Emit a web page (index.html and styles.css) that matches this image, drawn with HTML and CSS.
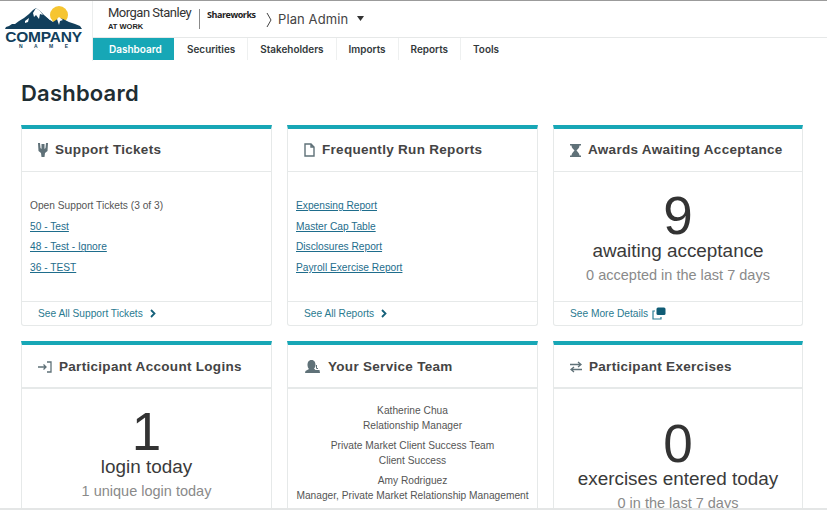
FILE: index.html
```html
<!DOCTYPE html>
<html lang="en">
<head>
<meta charset="utf-8">
<title>Dashboard</title>
<link rel="stylesheet" href="styles.css">
</head>
<body>
<header class="topbar">
  <div class="logo">
    <svg class="logo-art" width="78" height="24" viewBox="0 0 78 24">
      <circle cx="54" cy="9" r="9" fill="#f6c531"/>
      <path d="M0 23 L1 21 L4 20 L7 18 L10 18 L14 15 L19 12 L24 8 L28 4 L31 2 L35 5 L39 9 L45 14 L48 16 L54 12 L58 13 L64 16 L70 18 L75 20 L77 23 Z" fill="#123f5c"/>
      <path d="M31 2 L35 5 L38 9 L35 8 L34 13 L31 9 L29 11 L28 7 Z" fill="#fff"/>
      <path d="M33 2 L35 2 L47 14 L45 14 Z" fill="#fff"/>
      <path d="M52 13 L54 11 L58 14 L55 15 L54 19 Z" fill="#fff"/>
      <path d="M20 15 L24 12 L23 16 L20 17 Z" fill="#fff"/>
    </svg>
    <div class="logo-name">COMPANY</div>
    <div class="logo-sub">NAME</div>
  </div>
  <div class="top-right">
    <div class="brand-row">
      <div class="ms">
        <div class="ms-name">Morgan Stanley</div>
        <div class="ms-sub">AT WORK</div>
      </div>
      <div class="shareworks">Shareworks</div>
      <svg class="crumb" width="6" height="16" viewBox="0 0 6 16"><path d="M1 1 L5 8 L1 15" fill="none" stroke="#444" stroke-width="1"/></svg>
      <div class="plan">Plan Admin</div>
      <svg class="caret" width="7" height="5" viewBox="0 0 7 5"><path d="M0 0 H7 L3.500 5 Z" fill="#333"/></svg>
    </div>
    <nav class="nav">
      <a class="tab active">Dashboard</a>
      <a class="tab">Securities</a>
      <a class="tab">Stakeholders</a>
      <a class="tab">Imports</a>
      <a class="tab">Reports</a>
      <a class="tab last">Tools</a>
    </nav>
  </div>
</header>
<main class="main">
  <h1 class="page-title">Dashboard</h1>
  <div class="grid">
    <section class="card">
      <div class="card-head">
        <svg class="icon" width="10" height="14" viewBox="0 0 10 14"><path d="M0 0 L2 0 L2.500 5 L3.500 6 L3.500 1 L6.500 1 L6.500 6 L7.500 5 L8 0 L10 0 L9.500 8 L7 10 L6.500 14 L3.500 14 L3 10 L0.500 8 Z" fill="#5f7178"/></svg>
        <h2>Support Tickets</h2>
      </div>
      <div class="card-body list">
        <p>Open Support Tickets (3 of 3)</p>
        <p><a>50 - Test</a></p>
        <p><a>48 - Test - Ignore</a></p>
        <p><a>36 - TEST</a></p>
      </div>
      <div class="card-foot"><span>See All Support Tickets</span>
        <svg class="chev" width="6" height="9" viewBox="0 0 6 9"><path d="M1 1 L4.500 4.500 L1 8" fill="none" stroke="#14607a" stroke-width="1.800"/></svg>
      </div>
    </section>
    <section class="card">
      <div class="card-head">
        <svg class="icon" width="11" height="14" viewBox="0 0 11 14"><path d="M1 1 H7 L10 4 V13 H1 Z M7 1 V4 H10" fill="none" stroke="#5f7178" stroke-width="1.400"/></svg>
        <h2>Frequently Run Reports</h2>
      </div>
      <div class="card-body list">
        <p><a>Expensing Report</a></p>
        <p><a>Master Cap Table</a></p>
        <p><a>Disclosures Report</a></p>
        <p><a>Payroll Exercise Report</a></p>
      </div>
      <div class="card-foot"><span>See All Reports</span>
        <svg class="chev" width="6" height="9" viewBox="0 0 6 9"><path d="M1 1 L4.500 4.500 L1 8" fill="none" stroke="#14607a" stroke-width="1.800"/></svg>
      </div>
    </section>
    <section class="card">
      <div class="card-head">
        <svg class="icon" width="11" height="13" viewBox="0 0 11 13"><path d="M0 0 H11 V1.500 H9.500 C9.500 4 7.500 5 6.500 6.500 C7.500 8 9.500 9 9.500 11.500 H11 V13 H0 V11.500 H1.500 C1.500 9 3.500 8 4.500 6.500 C3.500 5 1.500 4 1.500 1.500 H0 Z" fill="#5f7178"/></svg>
        <h2>Awards Awaiting Acceptance</h2>
      </div>
      <div class="card-body stat">
        <div class="num">9</div>
        <div class="stat-main">awaiting acceptance</div>
        <div class="stat-sub">0 accepted in the last 7 days</div>
      </div>
      <div class="card-foot"><span>See More Details</span>
        <svg class="popout" width="14" height="13" viewBox="0 0 14 13"><path d="M3 4 H1 V12 H9 V10" fill="none" stroke="#2b7f96" stroke-width="1.200"/><rect x="4.500" y="0.500" width="9" height="7.500" rx="1.500" fill="#0f5c75"/></svg>
      </div>
    </section>
    <section class="card">
      <div class="card-head">
        <svg class="icon" width="14" height="12" viewBox="0 0 14 12"><path d="M0 6 H8 M5.500 3.500 L8 6 L5.500 8.500 M9 1 H13 V11 H9" fill="none" stroke="#5f7178" stroke-width="1.300"/></svg>
        <h2>Participant Account Logins</h2>
      </div>
      <div class="card-body stat second">
        <div class="num">1</div>
        <div class="stat-main">login today</div>
        <div class="stat-sub">1 unique login today</div>
      </div>
    </section>
    <section class="card">
      <div class="card-head">
        <svg class="icon" width="17" height="13" viewBox="-1 0 17 13"><path d="M6.500 0 C9.500 0 10.500 2.500 10.500 5 C10.500 6.500 10 7.500 9 8.500 L10.500 10 L14.500 10 L15 13 H0 L0.500 11 L4 9 C3 8 2.500 6.500 2.500 5 C2.500 2.500 3.500 0 6.500 0 Z" fill="#5f7178"/><path d="M11.500 5 V8.500 H13" fill="none" stroke="#5f7178"/></svg>
        <h2>Your Service Team</h2>
      </div>
      <div class="card-body team">
        <p>Katherine Chua<br>Relationship Manager</p>
        <p>Private Market Client Success Team<br>Client Success</p>
        <p>Amy Rodriguez<br>Manager, Private Market Relationship Management</p>
      </div>
    </section>
    <section class="card">
      <div class="card-head">
        <svg class="icon" width="12" height="12" viewBox="0 0 12 12"><path d="M0 3.500 H11 M8 1 L11 3.500 L8 6 M12 8.500 H1 M4 6 L1 8.500 L4 11" fill="none" stroke="#5f7178" stroke-width="1.300"/></svg>
        <h2>Participant Exercises</h2>
      </div>
      <div class="card-body stat tall">
        <div class="num">0</div>
        <div class="stat-main">exercises entered today</div>
        <div class="stat-sub">0 in the last 7 days</div>
      </div>
    </section>
  </div>
</main>
</body>
</html>
```
FILE: styles.css
```css
* { box-sizing: border-box; }
html, body { margin: 0; padding: 0; }
body {
  width: 827px;
  height: 510px;
  overflow: hidden;
  display: flex;
  flex-direction: column;
  background: #fff;
  font-family: "Liberation Sans", Arial, sans-serif;
  color: #3c3c3c;
  border-top: 1px solid #9b9b9b;
}
.topbar { display: flex; height: 60px; flex: none; }
.logo {
  width: 93px;
  flex: none;
  display: flex;
  flex-direction: column;
  align-items: center;
  padding: 5px 5px 0 0;
  border-right: 1px solid #eceeee;
}
.logo-art { display: block; }
.logo-name {
  font-size: 15.500px;
  font-weight: 700;
  line-height: 12px;
  margin-top: 1px;
  color: #123f5c;
  letter-spacing: -0.200px;
}
.logo-sub {
  font-size: 5px;
  font-weight: 700;
  line-height: 6px;
  color: #123f5c;
  letter-spacing: 11.500px;
  margin: 0 -11.500px 0 0;
}
.top-right { flex: 1; display: flex; flex-direction: column; }
.brand-row {
  height: 37px;
  display: flex;
  align-items: center;
  border-bottom: 1px solid #e6e8e8;
  padding-left: 15px;
  flex: none;
}
.ms { width: 92px; border-right: 1px solid #8a8a8a; height: 20px; flex: none; }
.ms-name {
  font-family: "Roboto", sans-serif;
  font-size: 13px;
  line-height: 14px;
  margin-top: -3px;
  color: #333;
  letter-spacing: -0.500px;
  white-space: nowrap;
}
.ms-sub { font-size: 7.500px; font-weight: 700; line-height: 9px; color: #222; margin-top: 2px; }
.shareworks {
  font-family: "Open Sans", sans-serif;
  font-size: 9px;
  font-weight: 700;
  color: #222;
  letter-spacing: -0.450px;
  margin: -9px 0 0 7px;
  width: 59px;
}
.crumb { flex: none; margin-top: 2px; }
.plan {
  font-family: "Inter", sans-serif;
  font-size: 13px;
  color: #444;
  margin-left: 6px;
  letter-spacing: 0.100px;
  margin-top: -1px;
}
.caret { margin: -1px 0 0 9px; flex: none; }
.nav { display: flex; height: 23px; flex: none; }
.tab {
  font-family: "Inter", sans-serif;
  font-weight: 600;
  font-size: 9.950px;
  line-height: 22px;
  color: #33393b;
  padding: 0 12px;
  height: 22px;
  border-right: 1px solid #eef0f0;
}
.tab.last { border-right: 0; }
.tab.active { background: #17a7b6; color: #fff; padding: 0 16px; width: 81px; border: 0; margin-right: 1px; font-size: 10px; }
.main { flex: 1; min-height: 0; overflow: hidden; padding: 0 24px 0 21px; border-bottom: 2px solid #e4e6e6; }
.page-title {
  font-family: "Inter", sans-serif;
  font-weight: 600;
  font-size: 22px;
  line-height: 28px;
  color: #1f2e33;
  margin: 18px 0 18px;
  letter-spacing: 0.200px;
}
.grid { display: grid; grid-template-columns: 251px 251px 250px; column-gap: 15px; row-gap: 15px; grid-auto-rows: 201px; }
.card {
  border: 1px solid #e6e9e9;
  border-top: 4px solid #17a7b6;
  border-radius: 0 0 3px 3px;
  display: flex;
  flex-direction: column;
  min-width: 0;
}
.card-head {
  height: 43px;
  flex: none;
  display: flex;
  align-items: center;
  gap: 7px;
  padding: 0 0 0 16px;
  border-bottom: 1px solid #e6e9e9;
}
.card:nth-child(n+4) .card-head { border-bottom-width: 2px; height: 44px; padding-top: 1px; }
.card-head h2 {
  margin: 0;
  font-size: 13.500px;
  font-weight: 700;
  line-height: 18px;
  color: #444;
  letter-spacing: 0.300px;
  white-space: nowrap;
}
.icon { flex: none; }
.card-body { flex: 1; min-height: 0; }
.list { padding: 28.300px 8px 0; font-size: 10.200px; color: #555; }
.list p { margin: 0 0 8.600px; line-height: 12px; }
.list a { color: #1e6d8c; text-decoration: underline; }
.card-foot {
  height: 24px;
  flex: none;
  display: flex;
  align-items: center;
  gap: 6px;
  padding-left: 16px;
  border-top: 1px solid #e6e9e9;
  font-size: 10.200px;
  color: #2a7a90;
}
.card-foot .chev { margin-left: 1px; }
.card-foot .popout { margin-left: -2px; }
.stat { text-align: center; padding-top: 19px; }
.stat.second { padding-top: 18px; }
.stat.tall { padding-top: 30px; }
.num { font-size: 53px; line-height: 49px; color: #333; }
.stat-main { font-size: 18.900px; line-height: 22px; color: #3a3a3a; }
.stat-sub { font-size: 14.500px; line-height: 18px; color: #8a8a8a; margin-top: 4px; }
.team { text-align: center; font-size: 10.200px; color: #555; padding-top: 15px; }
.team p { margin: 0 0 5.600px; line-height: 14.700px; }
```
